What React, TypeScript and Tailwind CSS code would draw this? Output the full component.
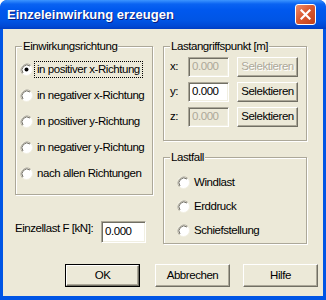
import React from 'react';

const panel = 'bg-[#ECE9D8]';

function Radio({ checked }: { checked?: boolean }) {
    return (
        <svg width="13" height="13" viewBox="0 0 13 13" className="shrink-0">
            <circle cx="6.5" cy="6.5" r="6" fill="#fff" stroke="#F1EFE2" />
            <path d="M2.3 10.7 A6 6 0 0 1 10.7 2.3" fill="none" stroke="#ACA899" strokeWidth="1" />
            <path d="M3.0 10.0 A5 5 0 0 1 10.0 3.0" fill="none" stroke="#716F64" strokeWidth="1" />
            {checked && <circle cx="6.5" cy="6.5" r="2" fill="#000" />}
        </svg>
    );
}

function RadioRow({ label, checked, focused, h }: { label: string; checked?: boolean; focused?: boolean; h: string }) {
    return (
        <div className={`flex items-center ${h}`}>
            <Radio checked={checked} />
            <span
                className={`ml-[1px] px-[2px] leading-[15px] border border-dotted ${
                    focused ? 'border-black' : 'border-transparent'
                }`}
            >
                {label}
            </span>
        </div>
    );
}

function Group({ label, className, children }: { label: string; className: string; children: React.ReactNode }) {
    return (
        <div className={`relative border border-[#ACA899] shadow-[inset_1px_1px_0_#fff,1px_1px_0_#fff] ${className}`}>
            <span className={`absolute left-[6px] -top-[8px] px-[1px] leading-[14px] ${panel}`}>{label}</span>
            {children}
        </div>
    );
}

function Field({ value, disabled, className }: { value: string; disabled?: boolean; className: string }) {
    return (
        <div
            className={`flex items-center pl-[3px] border border-t-[#ACA899] border-l-[#ACA899] border-b-white border-r-white shadow-[inset_1px_1px_0_#716F64,inset_-1px_-1px_0_#F1EFE2] ${
                disabled ? `${panel} text-[#ACA899]` : 'bg-white text-black'
            } ${className}`}
        >
            {value}
        </div>
    );
}

function Button({ label, disabled, primary, className }: { label: string; disabled?: boolean; primary?: boolean; className: string }) {
    const inner = (
        <div
            className={`flex-1 flex items-center justify-center border border-t-white border-l-white border-b-[#716F64] border-r-[#716F64] shadow-[inset_-1px_-1px_0_#ACA899] ${panel} ${
                disabled ? 'text-[#ACA899] [text-shadow:1px_1px_0_#fff]' : 'text-black'
            }`}
        >
            {label}
        </div>
    );
    return <div className={`flex ${primary ? 'border border-black' : ''} ${className}`}>{inner}</div>;
}

const directions = [
    'in positiver x-Richtung',
    'in negativer x-Richtung',
    'in positiver y-Richtung',
    'in negativer y-Richtung',
    'nach allen Richtungen',
];

const points = [
    { axis: 'x:', disabled: true },
    { axis: 'y:', disabled: false },
    { axis: 'z:', disabled: true },
];

export default function App() {
    return (
        <div className="w-[326px] h-[300px] flex flex-col rounded-t-[7px] bg-[#0055E5] font-['Liberation_Sans',Arial,sans-serif] text-[11.5px] tracking-[-0.45px] text-black overflow-hidden">
            {/* title bar */}
            <div className="h-[29px] flex items-center justify-between pl-[7px] pr-[10px] rounded-t-[7px] bg-[linear-gradient(to_bottom,#3D95FF_0%,#0A63F2_14%,#0058EE_35%,#0055E5_70%,#0049D5_90%,#003DC2_100%)]">
                <span className="text-white font-bold text-[13px] tracking-normal [text-shadow:1px_1px_0_#0A1E80]">
                    Einzeleinwirkung erzeugen
                </span>
                <div className="w-[21px] h-[21px] rounded-[3px] border border-white bg-[linear-gradient(135deg,#EE8E6E_0%,#DA5A32_45%,#C1401A_100%)] flex items-center justify-center">
                    <svg width="11" height="11" viewBox="0 0 11 11">
                        <path d="M1.5 1.5 L9.5 9.5 M9.5 1.5 L1.5 9.5" stroke="#fff" strokeWidth="2.2" strokeLinecap="square" />
                    </svg>
                </div>
            </div>

            {/* client area */}
            <div className={`flex-1 mx-[3px] mb-[4px] ${panel} pl-[12px] pt-[17px]`}>
                <div className="flex">
                    <div className="w-[138px] flex flex-col">
                        <Group label="Einwirkungsrichtung" className="h-[149px] pt-[9px] pl-[4px]">
                            {directions.map((d, i) => (
                                <RadioRow key={d} label={d} checked={i === 0} focused={i === 0} h="h-[26px]" />
                            ))}
                        </Group>
                        <div className="w-[131px] flex items-start justify-between mt-[26px]">
                            <span className="leading-[14px]">Einzellast F [kN]:</span>
                            <Field value="0.000" className="w-[45px] h-[22px]" />
                        </div>
                    </div>

                    <div className="ml-[10px] w-[144px] flex flex-col">
                        <Group label="Lastangriffspunkt [m]" className="h-[95px] pt-[10px] pl-[6px] flex flex-col gap-[5px]">
                            {points.map((p) => (
                                <div key={p.axis} className="flex items-center h-[20px]">
                                    <span className="w-[18px]">{p.axis}</span>
                                    <Field value="0.000" disabled={p.disabled} className="w-[41px] h-[20px]" />
                                    <Button label="Selektieren" disabled={p.axis === 'x:'} className="ml-[8px] w-[61px] h-[20px]" />
                                </div>
                            ))}
                        </Group>
                        <Group label="Lastfall" className="mt-[16px] h-[87px] pt-[12px] pl-[13px]">
                            {['Windlast', 'Erddruck', 'Schiefstellung'].map((l) => (
                                <RadioRow key={l} label={l} h="h-[24px]" />
                            ))}
                        </Group>
                    </div>
                </div>

                <div className="flex mt-[20px] pl-[50px]">
                    <Button label="OK" primary className="w-[75px] h-[23px]" />
                    <Button label="Abbrechen" className="ml-[15px] w-[75px] h-[23px]" />
                    <Button label="Hilfe" className="ml-[13px] w-[75px] h-[23px]" />
                </div>
            </div>
        </div>
    );
}
